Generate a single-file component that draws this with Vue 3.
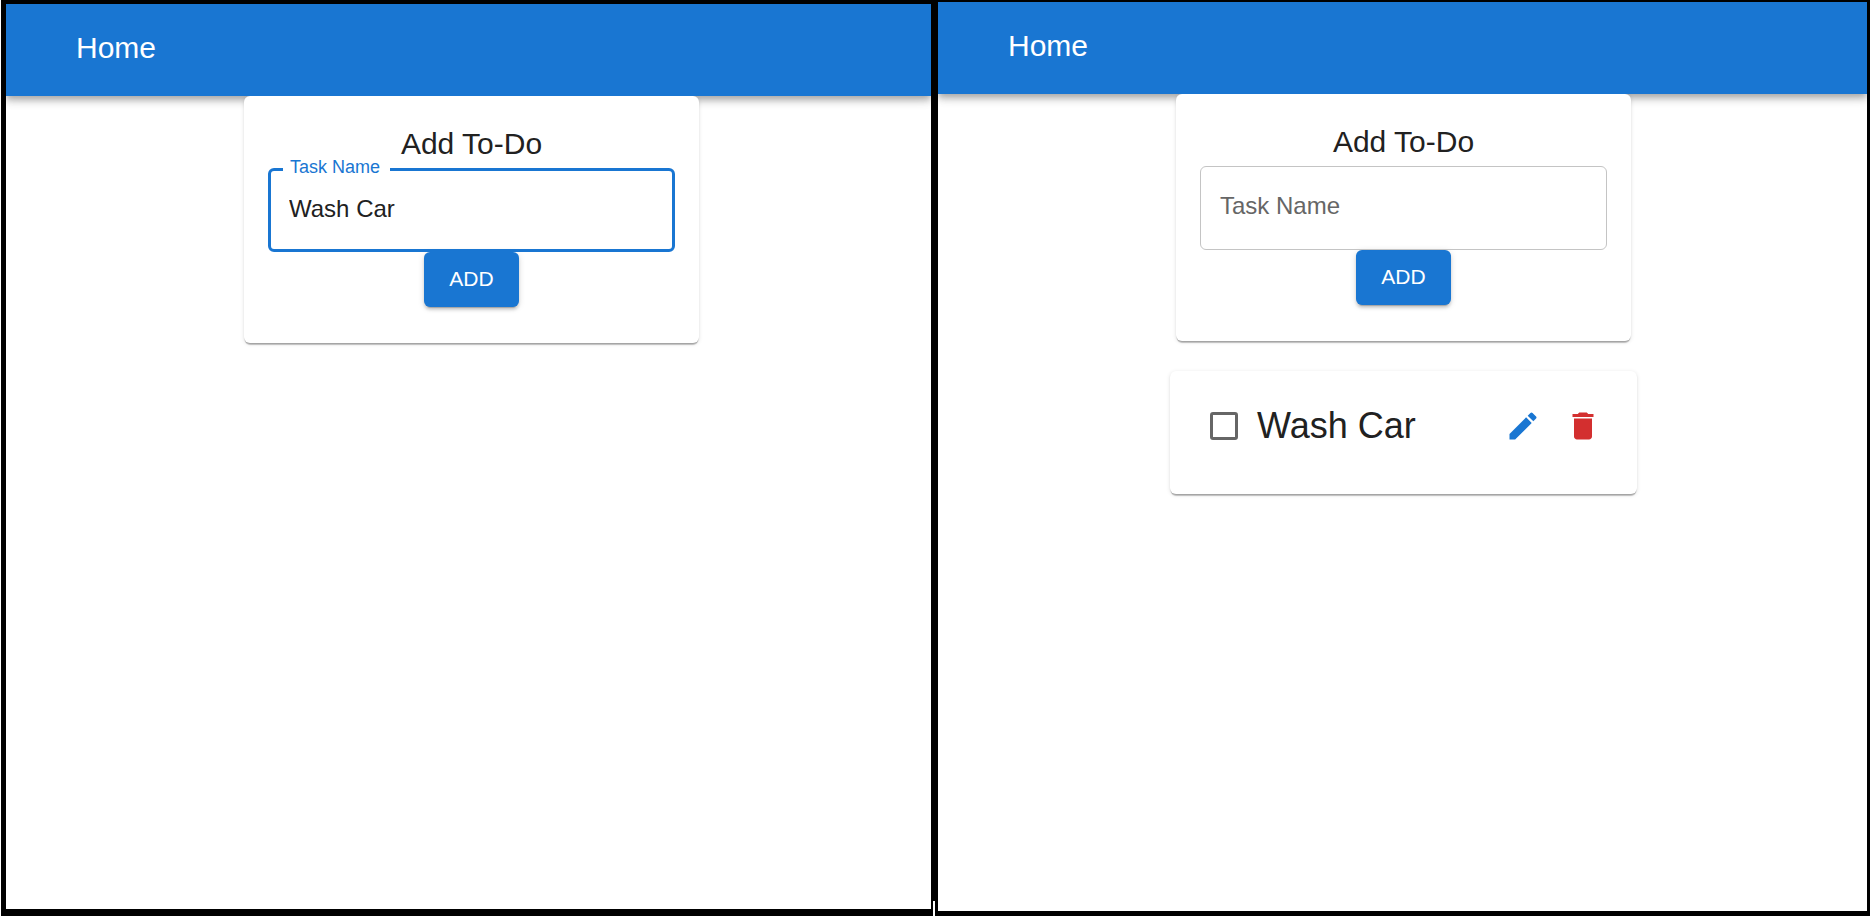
<script setup>
import { reactive } from 'vue'

const screens = reactive([
  { id: 'before', draft: 'Wash Car', active: true, todos: [] },
  { id: 'after', draft: '', active: false, todos: [{ id: 1, name: 'Wash Car', done: false }] },
])

let nextId = 2

function addTodo(screen) {
  const name = screen.draft.trim()
  if (!name) return
  screen.todos.push({ id: nextId++, name, done: false })
  screen.draft = ''
}

function editTodo(screen, todo) {
  screen.draft = todo.name
  removeTodo(screen, todo)
}

function removeTodo(screen, todo) {
  screen.todos = screen.todos.filter((t) => t.id !== todo.id)
}
</script>

<template>
  <div class="page">
    <section v-for="screen in screens" :key="screen.id" class="screen" :class="screen.id">
      <header class="bar">
        <a href="#" class="home">Home</a>
      </header>
      <main class="content">
        <form class="card add-card" @submit.prevent="addTodo(screen)">
          <h1 class="title">Add To-Do</h1>
          <div class="field" :class="{ active: screen.active, filled: screen.active || screen.draft }">
            <label :for="'task-' + screen.id">Task Name</label>
            <input :id="'task-' + screen.id" v-model="screen.draft" type="text" autocomplete="off" />
          </div>
          <button type="submit" class="add">ADD</button>
        </form>

        <article v-for="todo in screen.todos" :key="todo.id" class="card todo">
          <span class="check">
            <input :id="'todo-' + todo.id" v-model="todo.done" type="checkbox" />
          </span>
          <label class="name" :for="'todo-' + todo.id">{{ todo.name }}</label>
          <button type="button" class="icon edit" aria-label="Edit" @click="editTodo(screen, todo)">
            <svg viewBox="0 0 24 24" aria-hidden="true">
              <path d="M3 17.25V21h3.75L17.81 9.94l-3.75-3.75L3 17.25zM20.71 7.04c.39-.39.39-1.02 0-1.41l-2.34-2.34a.9959.9959 0 0 0-1.41 0l-1.83 1.83 3.75 3.75 1.83-1.83z" />
            </svg>
          </button>
          <button type="button" class="icon delete" aria-label="Delete" @click="removeTodo(screen, todo)">
            <svg viewBox="0 0 24 24" aria-hidden="true">
              <path d="M6 19c0 1.1.9 2 2 2h8c1.1 0 2-.9 2-2V7H6v12zM19 4h-3.5l-1-1h-5l-1 1H5v2h14V4z" />
            </svg>
          </button>
        </article>
      </main>
    </section>
  </div>
</template>

<style>
body {
  margin: 0;
  background: #fff;
}
</style>

<style scoped>
.page {
  box-sizing: border-box;
  display: grid;
  grid-template-columns: 925fr 929fr;
  gap: 7px;
  min-height: 100vh;
  padding: 0 3px 0 5px;
  border-left: 1px solid #fff;
  background: #000;
  font-family: "Liberation Sans", Arial, sans-serif;
  color: #212121;
}

/* short white notch at the foot of the divider */
.page::after {
  content: "";
  grid-area: 1 / 1;
  place-self: end;
  width: 2px;
  height: 15px;
  margin-right: -4px;
  background: #fff;
}

.screen {
  display: flex;
  flex-direction: column;
  overflow: hidden;
  background: #fff;
}

.before {
  grid-area: 1 / 1;
  margin: 4px 0 7px;
}

.after {
  grid-area: 1 / 2;
  margin: 2px 0 5px;
}

.bar {
  box-sizing: border-box;
  display: flex;
  align-items: center;
  height: 92px;
  padding: 0 70px 4px;
  background: #1976d2;
  box-shadow: 0 3px 6px -1px rgba(0, 0, 0, 0.2), 0 6px 7px rgba(0, 0, 0, 0.14),
    0 1px 14px rgba(0, 0, 0, 0.12);
}

.home {
  color: #fff;
  font-size: 30px;
  line-height: 48px;
  text-decoration: none;
}

.content {
  display: flex;
  flex-direction: column;
  align-items: center;
  gap: 30px;
  padding: 0 0 30px 2px;
}

.before .content {
  padding-left: 6px;
}

.card {
  box-sizing: border-box;
  position: relative;
  max-width: 100%;
  border-radius: 6px;
  background: #fff;
  box-shadow: 0 3px 1px -1px rgba(0, 0, 0, 0.2), 0 1px 1px rgba(0, 0, 0, 0.14),
    0 1px 4px rgba(0, 0, 0, 0.12);
  clip-path: inset(0 -8px -8px -8px);
}

.add-card {
  display: flex;
  flex-direction: column;
  align-items: center;
  width: 455px;
  padding: 24px 24px 36px;
}

.title {
  margin: 0;
  font-size: 30px;
  font-weight: 400;
  line-height: 48px;
}

.field {
  position: relative;
  width: 100%;
}

.field input {
  box-sizing: border-box;
  display: block;
  width: 100%;
  height: 84px;
  padding: 0 20px 2px;
  border: 1px solid #c4c4c4;
  border-radius: 6px;
  outline: none;
  background: transparent;
  color: #212121;
  font-family: inherit;
  font-size: 24px;
}

.field label {
  position: absolute;
  top: 24px;
  left: 20px;
  color: #666;
  font-size: 24px;
  line-height: 32px;
  pointer-events: none;
}

.field.active input,
.field input:focus {
  padding: 0 18px 2px;
  border: 3px solid #1976d2;
}

.field.filled label,
.field:focus-within label {
  top: -13px;
  left: 15px;
  padding: 0 10px 0 7px;
  background: #fff;
  color: #1976d2;
  font-size: 18px;
  line-height: 24px;
}

.add {
  height: 55px;
  padding: 0 25px 2px;
  border: 0;
  border-radius: 6px;
  background: #1976d2;
  box-shadow: 0 4px 1px -3px rgba(0, 0, 0, 0.2), 0 3px 3px rgba(0, 0, 0, 0.14),
    0 1px 7px rgba(0, 0, 0, 0.12);
  color: #fff;
  font-family: inherit;
  font-size: 21px;
  cursor: pointer;
}

.todo {
  display: flex;
  align-items: center;
  width: 467px;
  padding: 25px 24px 38px;
  clip-path: none;
}

.check {
  display: flex;
  align-items: center;
  justify-content: center;
  width: 60px;
  height: 60px;
}

.check input {
  box-sizing: border-box;
  appearance: none;
  width: 28px;
  height: 28px;
  margin: 0;
  border: 3px solid #666;
  border-radius: 3px;
  cursor: pointer;
}

.check input:checked {
  border-color: #1976d2;
  background: #1976d2;
}

.name {
  flex: 1;
  padding-left: 3px;
  font-size: 36px;
  line-height: 48px;
}

.icon {
  width: 60px;
  height: 60px;
  padding: 12px;
  border: 0;
  border-radius: 50%;
  background: transparent;
  cursor: pointer;
}

.icon svg {
  display: block;
  width: 36px;
  height: 36px;
  fill: currentColor;
}

.edit {
  color: #1976d2;
}

.delete {
  color: #d32f2f;
}
</style>
